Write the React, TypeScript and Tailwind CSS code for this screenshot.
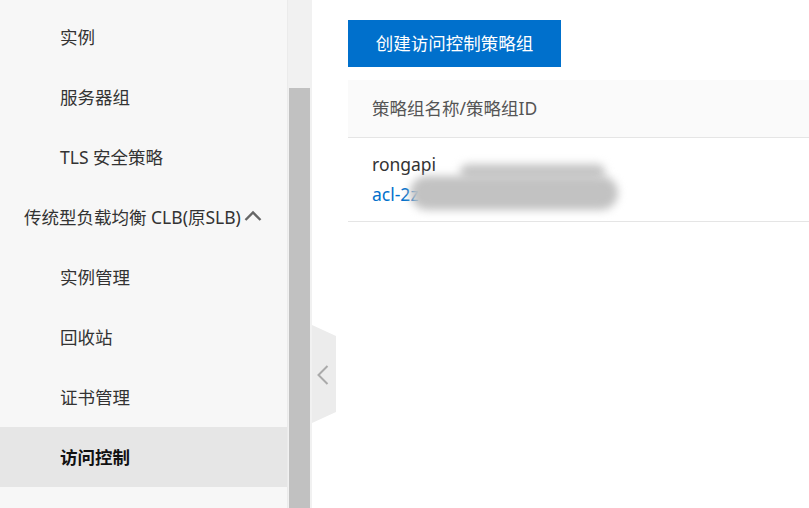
const font = { fontFamily: '"Noto Sans", "Noto Sans CJK SC", sans-serif' };

interface NavItem {
  label: string;
  level: 1 | 2;
  active?: boolean;
  open?: boolean;
}

const items: NavItem[] = [
  { label: "实例", level: 2 },
  { label: "服务器组", level: 2 },
  { label: "TLS 安全策略", level: 2 },
  { label: "传统型负载均衡 CLB(原SLB)", level: 1, open: true },
  { label: "实例管理", level: 2 },
  { label: "回收站", level: 2 },
  { label: "证书管理", level: 2 },
  { label: "访问控制", level: 2, active: true },
];

function Sidebar() {
  return (
    <div className="w-[287px] shrink-0 bg-[#f7f7f7] pt-[7px]">
      {items.map((item) => (
        <div
          key={item.label}
          className={`h-[60px] flex items-center text-[17.5px] ${
            item.level === 1 ? "pl-[24px]" : "pl-[60px]"
          } ${item.active ? "bg-[#e6e6e6] font-bold text-[#111]" : "text-[#333]"}`}
        >
          <span>{item.label}</span>
          {item.open && (
            <svg width="18" height="12" viewBox="0 0 18 12" className="ml-[3px] mb-[2px]">
              <polyline points="1.5,10 9,2.5 16.5,10" fill="none" stroke="#666" strokeWidth="2.4" />
            </svg>
          )}
        </div>
      ))}
    </div>
  );
}

function Scrollbar() {
  return (
    <div className="w-[25px] shrink-0 bg-[#f1f1f1] border-l border-[#ebebeb] flex flex-col pt-[88px] pl-[1px] pr-[2px]">
      <div className="flex-1 bg-[#c1c1c1]" />
    </div>
  );
}

export default function App() {
  return (
    <div className="flex h-[508px] w-[809px] overflow-hidden bg-white" style={font}>
      <Sidebar />
      <Scrollbar />
      <div className="relative flex-1 pl-[36px] pt-[20px]">
        {/* collapse tab */}
        <svg width="24" height="98" viewBox="0 0 24 98" className="absolute left-0 top-[325px]">
          <polygon points="0,0 24,11 24,87 0,98" fill="#ececec" />
          <polyline points="15.5,41 6.5,50 15.5,59" fill="none" stroke="#aaa" strokeWidth="2" />
        </svg>

        <button className="h-[47px] w-[213px] bg-[#0070cc] text-white text-[17.5px] flex items-center justify-center">
          创建访问控制策略组
        </button>

        <div className="mt-[13px]">
          <div className="h-[58px] bg-[#fafafa] border-b border-[#e5e5e5] flex items-center pl-[24px] text-[17.5px] text-[#555]">
            策略组名称/策略组ID
          </div>
          <div className="relative pt-[11px] pb-[12px] pl-[24px] border-b border-[#e5e5e5] text-[17.5px] leading-[30px]">
            <div className="text-[#333]">rongapi</div>
            <div className="text-[#0070cc]">acl-2z</div>
            <div className="absolute left-[112px] top-[26px] w-[145px] h-[16px] rounded-full bg-[#c6c6c6] blur-[4px]" />
            <div className="absolute left-[62px] top-[38px] w-[208px] h-[34px] rounded-full bg-[#c2c2c2] blur-[4px]" />
          </div>
        </div>
      </div>
    </div>
  );
}
